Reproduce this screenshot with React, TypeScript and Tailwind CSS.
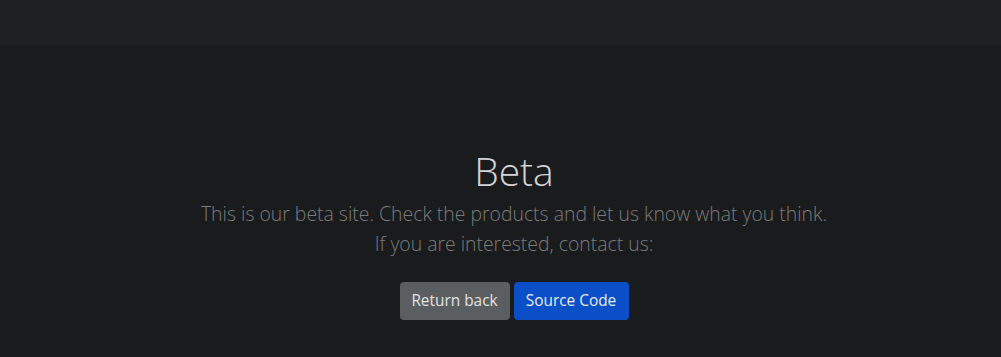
export default function App() {
  return (
    <div className="min-h-[357px] bg-[#1a1b1d] flex flex-col" style={{ fontFamily: '"Open Sans", "Noto Sans", sans-serif' }}>
      <div className="h-[45px] bg-[#1f2022]" />
      <div className="flex flex-col items-center pt-[101px] pl-[27px] text-center">
        <h1 className="text-[39px] leading-[50px] font-light text-[#d2d4d6]">Beta</h1>
        <p className="mt-[3px] text-[19.4px] leading-[30px] font-light text-[#7b7b7b]">
          This is our beta site. Check the products and let us know what you think.
          <br />
          If you are interested, contact us:
        </p>
        <div className="mt-[23px] flex gap-[4px]">
          <button className="h-[38px] w-[110px] rounded-[4px] bg-[#5a5e61] text-[15.4px] text-[#e2e2e2]">Return back</button>
          <button className="h-[38px] w-[115px] rounded-[4px] bg-[#0a4fc8] text-[15.4px] text-[#e8ecf5]">Source Code</button>
        </div>
      </div>
    </div>
  );
}
